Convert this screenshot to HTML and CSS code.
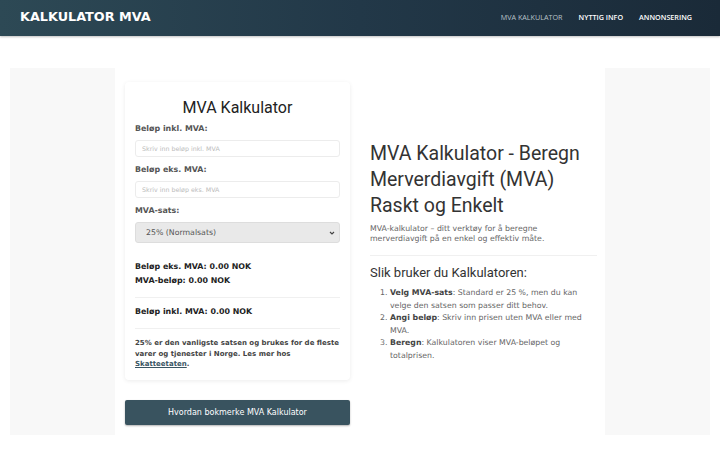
FILE: index.html
```html
<!DOCTYPE html>
<html lang="no">
<head>
    <meta charset="UTF-8">
    <meta name="viewport" content="width=device-width, initial-scale=1.0">
    <title>Kalkulator MVA</title>
    <link rel="stylesheet" href="styles.css">
</head>
<body>
    <div class="header">
        <div class="logo">KALKULATOR MVA</div>
        <nav class="nav">
            <a class="active" href="#">MVA KALKULATOR</a>
            <a href="#">NYTTIG INFO</a>
            <a href="#">ANNONSERING</a>
        </nav>
    </div>

    <div class="layout">
        <aside class="side"></aside>

        <div class="calc-col">
            <div class="card">
                <h1>MVA Kalkulator</h1>
                <div class="form-group">
                    <label for="inkl">Beløp inkl. MVA:</label>
                    <input type="text" id="inkl" placeholder="Skriv inn beløp inkl. MVA">
                </div>
                <div class="form-group">
                    <label for="eks">Beløp eks. MVA:</label>
                    <input type="text" id="eks" placeholder="Skriv inn beløp eks. MVA">
                </div>
                <div class="form-group">
                    <label for="sats">MVA-sats:</label>
                    <select id="sats">
                        <option>25% (Normalsats)</option>
                        <option>15% (Næringsmidler)</option>
                        <option>12% (Lav sats)</option>
                    </select>
                </div>
                <div class="results">
                    <p>Beløp eks. MVA: 0.00 NOK</p>
                    <p>MVA-beløp: 0.00 NOK</p>
                </div>
                <hr class="sep-top">
                <div class="total">Beløp inkl. MVA: 0.00 NOK</div>
                <hr class="sep-bottom">
                <p class="note">25% er den vanligste satsen og brukes for de fleste varer og tjenester i Norge. Les mer hos <a href="#">Skatteetaten</a>.</p>
            </div>
            <button class="bookmark-btn">Hvordan bokmerke MVA Kalkulator</button>
        </div>

        <div class="content">
            <h2>MVA Kalkulator - Beregn Merverdiavgift (MVA) Raskt og Enkelt</h2>
            <p class="lead">MVA-kalkulator – ditt verktøy for å beregne merverdiavgift på en enkel og effektiv måte.</p>
            <hr>
            <h3>Slik bruker du Kalkulatoren:</h3>
            <ol>
                <li><b>Velg MVA-sats</b>: Standard er 25 %, men du kan velge den satsen som passer ditt behov.</li>
                <li><b>Angi beløp</b>: Skriv inn prisen uten MVA eller med MVA.</li>
                <li><b>Beregn</b>: Kalkulatoren viser MVA-beløpet og totalprisen.</li>
            </ol>
        </div>

        <aside class="side"></aside>
    </div>
</body>
</html>
```

FILE: styles.css
```css
body {
    font-family: "DejaVu Sans", sans-serif;
    margin: 0;
    background-color: #fff;
    color: #333;
}
.header {
    height: 36px;
    display: flex;
    justify-content: space-between;
    align-items: center;
    padding: 0 28px 0 20px;
    background: linear-gradient(90deg, #2d4955 0%, #223848 50%, #1a2a38 100%);
    box-shadow: 0 1px 2px rgba(0,0,0,0.25);
}
.logo {
    color: #fff;
    font-weight: bold;
    font-size: 12.8px;
    margin-top: -4px;
}
.nav {
    display: flex;
    gap: 16px;
    margin-top: -2px;
}
.nav a {
    color: #fff;
    text-decoration: none;
    font-family: "Open Sans", sans-serif;
    font-size: 7.2px;
    font-weight: 600;
}
.nav a.active {
    color: #b8c2c8;
    font-weight: 400;
}
.layout {
    display: grid;
    grid-template-columns: 105px 235px 255px 105px;
    padding: 32px 10px 0;
}
.side {
    background: #f8f8f8;
    height: 367px;
}
.calc-col {
    margin-left: 10px;
    padding-top: 14px;
}
.card {
    background: #fff;
    padding: 12px 10px 10px;
    border-radius: 4px;
    box-shadow: 0 1px 4px rgba(0,0,0,0.08);
}
.card h1 {
    font-family: Roboto, sans-serif;
    font-weight: 400;
    font-size: 16px;
    line-height: 20px;
    text-align: center;
    color: #222;
    margin: 4px 0 6px;
}
.form-group {
    margin-bottom: 8px;
}
label {
    display: block;
    font-size: 7.9px;
    line-height: 10px;
    font-weight: bold;
    color: #555;
    margin-bottom: 6px;
}
input, select {
    display: block;
    width: 100%;
    box-sizing: border-box;
    font-family: "DejaVu Sans", sans-serif;
    border: 1px solid #ececec;
    border-radius: 3px;
}
input {
    height: 17px;
    padding: 0 6px;
    font-size: 6.3px;
}
input::placeholder {
    color: #bbb;
}
select {
    appearance: none;
    height: 21px;
    padding: 0 10px;
    font-size: 7.8px;
    color: #555;
    background-color: #e9e9e9;
    background-image: url("data:image/svg+xml,%3Csvg xmlns='http://www.w3.org/2000/svg' width='6' height='4' viewBox='0 0 6 4'%3E%3Cpath d='M1 1l2 2 2-2' fill='none' stroke='%23444' stroke-width='1.1'/%3E%3C/svg%3E");
    background-repeat: no-repeat;
    background-position: right 4px center;
    border-color: #ddd;
}
.results {
    margin-top: 19px;
}
.results p, .total {
    font-size: 7.9px;
    line-height: 10px;
    font-weight: bold;
    color: #222;
    margin: 0 0 4px;
}
.results p:last-child {
    margin-bottom: 0;
}
hr {
    border: none;
    border-top: 1px solid #f0f0f0;
}
.sep-top {
    margin: 11px 0 9px;
}
.total {
    margin: 0;
}
.sep-bottom {
    margin: 11px 0 9px;
}
.note {
    font-size: 7px;
    font-weight: bold;
    line-height: 10.5px;
    color: #444;
    margin: 0;
}
.note a {
    color: #3a5563;
}
.bookmark-btn {
    display: block;
    width: 100%;
    height: 25px;
    margin-top: 20px;
    background-color: #39535f;
    color: #fff;
    border: none;
    border-radius: 2px;
    font-family: "DejaVu Sans", sans-serif;
    font-size: 8px;
    box-shadow: 0 1px 2px rgba(0,0,0,0.3);
    cursor: pointer;
}
.content {
    margin: 0 8px 0 20px;
    padding-top: 73px;
}
.content h2 {
    font-family: Roboto, sans-serif;
    font-weight: 400;
    font-size: 19.5px;
    line-height: 26px;
    color: #333;
    margin: 0 0 5px;
}
.lead {
    font-size: 7.8px;
    line-height: 10px;
    color: #666;
    margin: 0;
}
.content hr {
    margin: 11px 0 9px;
}
.content h3 {
    font-family: Roboto, sans-serif;
    font-weight: 400;
    font-size: 13px;
    line-height: 16px;
    color: #333;
    margin: 0 0 6px;
}
ol {
    margin: 0;
    padding-left: 20px;
    font-size: 7.8px;
    line-height: 12.5px;
    color: #666;
}
ol b {
    color: #444;
}
```
